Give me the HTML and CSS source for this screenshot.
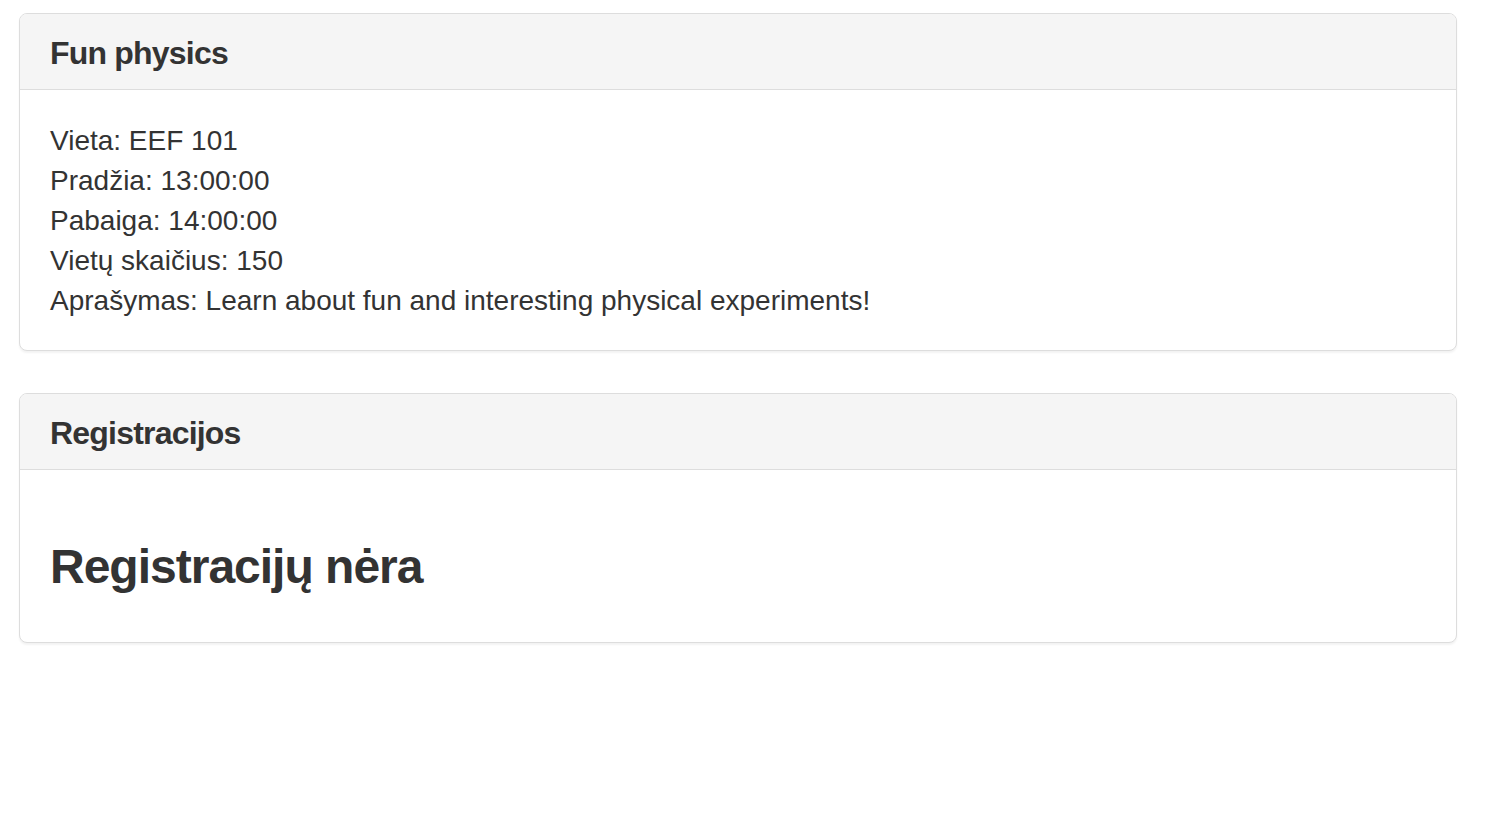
FILE: index.html
```html
<!DOCTYPE html>
<html lang="lt">
<head>
<meta charset="utf-8">
<title>Fun physics</title>
<link rel="stylesheet" href="styles.css">
</head>
<body>
<div class="page">
  <div class="panel">
    <div class="panel-heading"><h3 class="panel-title">Fun physics</h3></div>
    <div class="panel-body">
      <div>Vieta: EEF 101</div>
      <div>Pradžia: 13:00:00</div>
      <div>Pabaiga: 14:00:00</div>
      <div>Vietų skaičius: 150</div>
      <div>Aprašymas: Learn about fun and interesting physical experiments!</div>
    </div>
  </div>
  <div class="panel">
    <div class="panel-heading"><h3 class="panel-title">Registracijos</h3></div>
    <div class="panel-body">
      <h3 class="empty">Registracijų nėra</h3>
    </div>
  </div>
</div>
</body>
</html>
```
FILE: styles.css
```css
html, body {
  margin: 0;
  padding: 0;
  background: #fff;
}
body {
  font-family: "Liberation Sans", Arial, sans-serif;
  font-size: 28px;
  line-height: 40px;
  color: #333;
}
.page {
  padding: 13px 33px 0 19px;
}
.panel {
  background: #fff;
  border: 1px solid #ddd;
  border-radius: 8px;
  box-shadow: 0 2px 2px rgba(0,0,0,0.05);
  margin-bottom: 42px;
}
.panel-heading {
  background: #f5f5f5;
  border-bottom: 1px solid #ddd;
  border-radius: 7px 7px 0 0;
  padding: 22px 30px 18px;
}
.panel-title {
  margin: 0;
  font-size: 32px;
  line-height: 1.1;
  font-weight: 700;
  letter-spacing: -0.8px;
  color: #333;
}
.panel-body {
  padding: 31px 30px 29px;
}
.empty {
  margin: 40px 0 19px;
  font-size: 48px;
  line-height: 1.1;
  font-weight: 700;
  letter-spacing: -1px;
}
```
